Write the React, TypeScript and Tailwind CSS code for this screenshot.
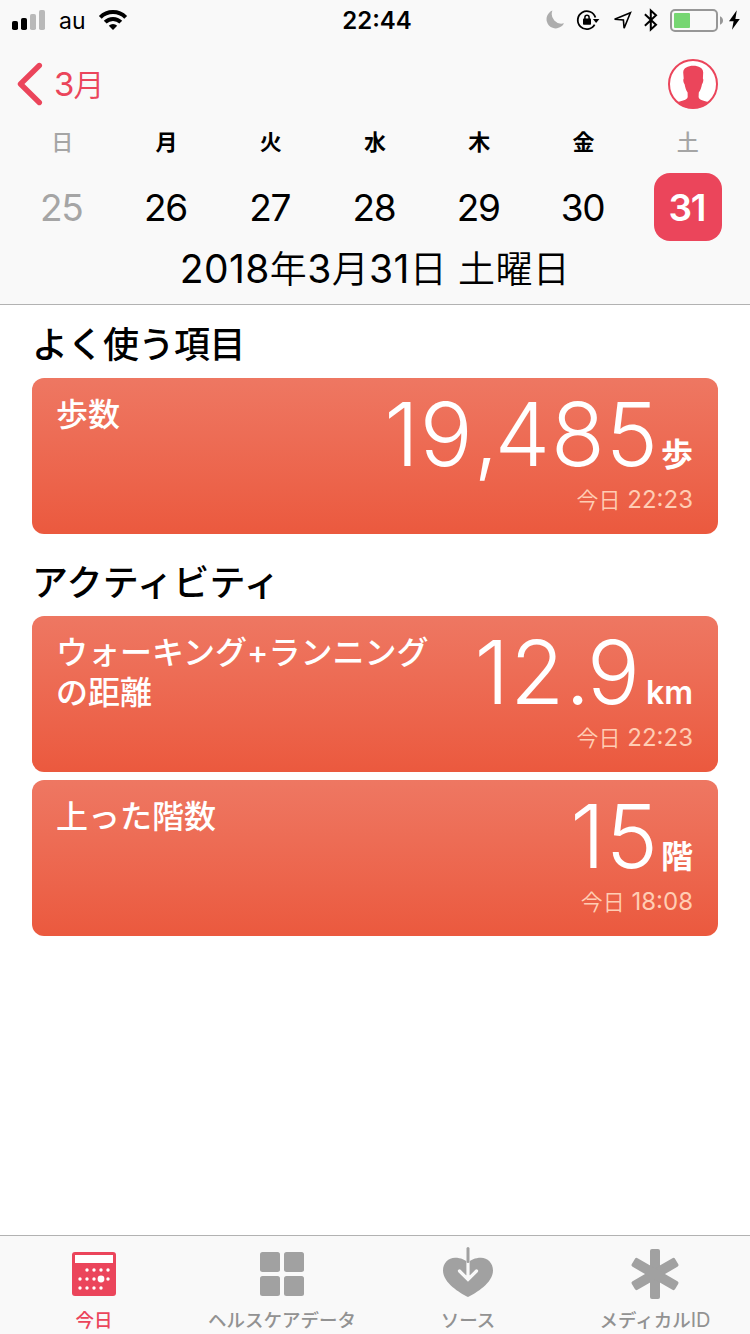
import type { ReactNode } from "react";
import clsx from "clsx";

const weekDays = [
  { label: "日", date: 25, weekend: true },
  { label: "月", date: 26 },
  { label: "火", date: 27 },
  { label: "水", date: 28 },
  { label: "木", date: 29 },
  { label: "金", date: 30 },
  { label: "土", date: 31, weekend: true, selected: true },
];

/** Status bar */
function StatusBar() {
  return (
    <div className="grid h-10 grid-cols-[1fr_auto_1fr] items-center pr-[10px] pl-3">
      <div className="flex items-center">
        <svg width="33" height="20" viewBox="0 0 33 20">
          <rect x="0" y="11" width="6" height="9" rx="1.8" />
          <rect x="9" y="8" width="6" height="12" rx="1.8" />
          <rect x="18" y="4" width="6" height="16" rx="1.8" fill="#b9b9b9" />
          <rect x="27" y="0" width="6" height="20" rx="1.8" fill="#b9b9b9" />
        </svg>
        <span className="ml-[14px] w-[26px] pt-0.5 text-[23px] leading-8">au</span>
        <svg className="ml-[13px]" width="30" height="22" viewBox="0 0 30 22" fill="none" stroke="#000" strokeWidth="4">
          <path d="M2.3 8.3A18 18 0 0 1 27.7 8.3" />
          <path d="M7.2 13.2A11 11 0 0 1 22.8 13.2" />
          <path d="M15 21L10.8 16.8A6 6 0 0 1 19.2 16.8Z" fill="#000" stroke="none" />
        </svg>
      </div>
      <span className="pt-0.5 pl-0.5 text-2xl leading-8 font-semibold">22:44</span>
      <div className="flex items-center justify-end">
        {/* Do not disturb */}
        <svg width="20" height="24" viewBox="0 0 20 24">
          <path d="M7.4 2.6A9.2 9.2 0 1 0 19 15.2A9.6 9.6 0 0 1 7.4 2.6Z" fill="#adadad" />
        </svg>
        {/* Rotation lock */}
        <svg className="ml-[11px]" width="24" height="24" viewBox="0 0 24 24">
          <path d="M19.4 9.6A9 9 0 1 0 18.6 16.6" fill="none" stroke="#000" strokeWidth="1.8" />
          <path d="M16.9 11H23.4L20.1 15Z" />
          <rect x="7" y="10.6" width="8" height="6.2" rx="0.8" />
          <path d="M8.9 11V9.4A2.1 2.1 0 0 1 13.1 9.4V11" fill="none" stroke="#000" strokeWidth="1.5" />
        </svg>
        <svg className="ml-3" width="20" height="24" viewBox="0 0 20 24" fill="none" stroke="#000" strokeWidth="1.6">
          <path d="M2.6 11.3L18.4 4.7L12.1 20.2L11.4 12Z" />
        </svg>
        <svg className="ml-3" width="14" height="24" viewBox="0 0 14 24" fill="none" stroke="#000" strokeWidth="2">
          <path d="M0.9 6.3L12 16.7L6.8 21.4V2.6L12 7.3L0.9 17.7" />
        </svg>
        <svg className="ml-3" width="54" height="24" viewBox="0 0 54 24">
          <rect x="1" y="2" width="46" height="21" rx="4" fill="none" stroke="#979797" strokeWidth="2" />
          <rect x="4" y="5" width="16" height="15" rx="1" fill="#76d672" />
          <path d="M50 8.2C52 9 53 10.5 53 12.5S52 16 50 16.8Z" fill="#979797" />
        </svg>
        <svg className="ml-[5px]" width="11" height="24" viewBox="0 0 11 24">
          <path d="M7.8 2.2L0 13.2H4.6L3 21.8L10.8 11H6.4Z" />
        </svg>
      </div>
    </div>
  );
}

function NavBar() {
  return (
    <div className="flex h-[88px] items-center justify-between pr-8 pl-[17px]">
      <div className="flex items-center text-[#eb455b]">
        <svg width="26" height="44" viewBox="0 0 26 44" fill="none" stroke="currentColor" strokeWidth="5.4" strokeLinecap="round" strokeLinejoin="round">
          <path d="M22.3 3.5L3.5 22L22.3 40.5" />
        </svg>
        <span className="ml-[11px] text-[33px] leading-[44px] tracking-[-1px]">
          3<span className="text-[31px] font-[350]">月</span>
        </span>
      </div>
      <svg width="50" height="50" viewBox="0 0 50 50" fill="#eb455b">
        <clipPath id="avatar">
          <circle cx="25" cy="25" r="24.5" />
        </clipPath>
        <circle cx="25" cy="25" r="24" fill="#fff" stroke="#eb455b" strokeWidth="2" />
        <path
          clipPath="url(#avatar)"
          d="M25.3 6.8C30.5 6.8 35.2 9 35.2 13.5L34.9 19.5C35.9 20.5 35 24 34 25.2C33.4 28.5 32.5 31 30.8 33.5L30.6 38C31.2 41.5 36 41.6 41 43.3V50H9V43.3C14 41.6 18.9 41.5 19.7 38L19.6 33.5C18 31 17.2 28.5 16.6 25.2C15.5 24 14.7 20.5 15.7 19.5L15.2 13.5C15.2 9 20 6.8 25.3 6.8Z"
        />
      </svg>
    </div>
  );
}

function WeekStrip() {
  return (
    <div className="grid grid-cols-7 px-[10px]">
      {weekDays.map((day) => (
        <div key={day.date} className="flex flex-col items-center">
          <span className={clsx("h-[45px] text-[22px] leading-[28px]", day.weekend ? "font-medium text-[#a5a5a5]" : "font-bold")}>
            {day.label}
          </span>
          <span
            className={clsx(
              "flex size-[68px] items-center justify-center rounded-2xl pr-0.5 text-[37px] leading-none tracking-[-1.3px]",
              day.selected && "bg-[#eb455b] font-semibold text-white",
              day.weekend && !day.selected && "text-[#a5a5a5]"
            )}
          >
            {day.date}
          </span>
        </div>
      ))}
    </div>
  );
}

/** Kanji of the long date, lighter and a little smaller than its digits */
function Kanji({ children }: { children: ReactNode }) {
  return <span className="text-[37px] font-[350]">{children}</span>;
}

type MetricCardProps = {
  title: ReactNode;
  value: string;
  unit: string;
  time: string;
};

function MetricCard({ title, value, unit, time }: MetricCardProps) {
  return (
    <div className="flex h-[156px] justify-between rounded-xl bg-linear-to-b from-[#ee7762] to-[#eb593e] pr-[25px] pl-6 text-white">
      <h3 className="pt-[17px] text-[32px] leading-10 font-medium whitespace-nowrap">{title}</h3>
      <div className="flex flex-col items-end whitespace-nowrap">
        <div className="flex h-[106px] items-baseline leading-[112px]">
          <span className="text-[88px] font-light tracking-[1px] [font-kerning:none]">
            {value.split(/([.,])/).map((part, i) => (
              <span key={i} className={clsx(part === "," && "tracking-[-4px]", part === "." && "tracking-[-3px]")}>{part}</span>
            ))}
          </span>
          <span className={clsx("text-[32px] font-semibold", unit === "km" ? "ml-[5px]" : "ml-[2px]")}>{unit}</span>
        </div>
        <span className="text-2xl leading-8 text-[#ffcdb4]">
          <span className="text-[22px] font-[350]">今日</span> {time}
        </span>
      </div>
    </div>
  );
}

function SectionTitle({ className, children }: { className?: string; children: ReactNode }) {
  return <h2 className={clsx("text-[36px] leading-[66px] font-medium", className)}>{children}</h2>;
}

/** Tab bar */
function Tab({ label, active, children }: { label: ReactNode; active?: boolean; children: ReactNode }) {
  return (
    <div className={clsx("flex flex-col items-center pt-[11px]", active ? "text-[#eb455b]" : "text-[#a1a1a1]")}>
      <svg width="52" height="52" viewBox="0 0 52 52" fill="currentColor">
        {children}
      </svg>
      <span className={clsx("mt-[7px] text-[18.5px] leading-7 font-medium whitespace-nowrap", !active && "text-[#929292]")}>{label}</span>
    </div>
  );
}

const calendarDots = [
  [19, 23], [26, 23], [33, 23], [40, 23],
  [12, 32], [19, 32], [26, 32], [40, 32],
  [12, 41], [19, 41], [26, 41], [33, 41],
];

function TabBar() {
  return (
    <nav className="grid h-[99px] grid-cols-[188px_188px_184px_190px] border-t border-[#b2b2b2] bg-[#f9f9f9]">
      <Tab label="今日" active>
        <rect x="4" y="5" width="44" height="44" rx="3" />
        <rect x="7" y="8" width="38" height="8" fill="#fff" />
        {calendarDots.map(([x, y]) => (
          <circle key={`${x}-${y}`} cx={x} cy={y} r="1.7" fill="#fff" />
        ))}
        <circle cx="33" cy="32" r="3.4" fill="#fff" />
      </Tab>
      <Tab label="ヘルスケアデータ">
        <rect x="4" y="5" width="20" height="20" rx="2.5" />
        <rect x="28" y="5" width="20" height="20" rx="2.5" />
        <rect x="4" y="29" width="20" height="20" rx="2.5" />
        <rect x="28" y="29" width="20" height="20" rx="2.5" />
      </Tab>
      <Tab label="ソース">
        <path d="M26 50C18 46 1 36 1 23.5C1 16 6.5 10.8 13 10.8C19 10.8 23.5 13 26 16C28.5 13 33 10.8 39 10.8C45.5 10.8 51 16 51 23.5C51 36 34 46 26 50Z" />
        <path d="M26 12V32M17.5 24L26 32.5L34.5 24" fill="none" stroke="#f9f9f9" strokeWidth="3.2" strokeLinecap="round" />
        <path d="M26 1.5V14.5" fill="none" stroke="#a1a1a1" strokeWidth="3" strokeLinecap="round" />
      </Tab>
      <Tab label={<>メディカル<span className="text-[20px] font-normal">ID</span></>}>
        <rect x="21" y="2" width="10" height="50" rx="2" />
        <rect x="21" y="2" width="10" height="50" rx="2" transform="rotate(60 26 27)" />
        <rect x="21" y="2" width="10" height="50" rx="2" transform="rotate(-60 26 27)" />
      </Tab>
    </nav>
  );
}

export default function App() {
  return (
    <div className="flex h-[1334px] w-[750px] flex-col overflow-hidden bg-white font-['Inter','Noto_Sans_CJK_JP',sans-serif] text-black">
      <header className="h-[305px] border-b border-[#b2b2b2] bg-[#f9f9f9]">
        <StatusBar />
        <NavBar />
        <WeekStrip />
        <p className="text-center text-[39px] leading-[55px] tracking-[0.4px]">
          2018<Kanji>年</Kanji>3<Kanji>月</Kanji>31<Kanji>日 土曜日</Kanji>
        </p>
      </header>
      <main className="flex-1 px-8">
        <section className="pt-[7px]">
          <SectionTitle className="tracking-[-0.5px]">よく使う項目</SectionTitle>
          <MetricCard title="歩数" value="19,485" unit="歩" time="22:23" />
        </section>
        <section className="pt-4">
          <SectionTitle className="tracking-[0.3px]">アクティビティ</SectionTitle>
          <div className="flex flex-col gap-2">
            <MetricCard
              title={<>ウォーキング+ランニング<br />の距離</>}
              value="12.9"
              unit="km"
              time="22:23"
            />
            <MetricCard title="上った階数" value="15" unit="階" time="18:08" />
          </div>
        </section>
      </main>
      <TabBar />
    </div>
  );
}
